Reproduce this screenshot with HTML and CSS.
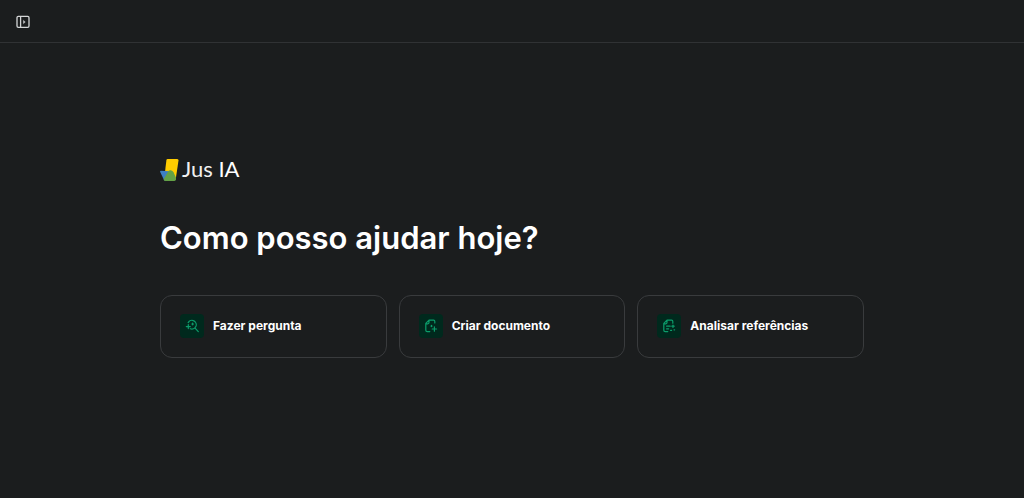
FILE: index.html
```html
<!DOCTYPE html>
<html lang="pt-BR">
<head>
<meta charset="utf-8">
<meta name="viewport" content="width=device-width, initial-scale=1">
<title>Jus IA</title>
<link rel="stylesheet" href="styles.css">
</head>
<body>
<header class="topbar">
  <button class="toggle" type="button" aria-label="Abrir menu">
    <svg viewBox="0 0 14 14" width="14" height="14" fill="none" stroke="currentColor" stroke-width="1.3" stroke-linejoin="round"><rect x="1" y="1.4" width="12" height="11" rx="1.3"/><path d="M4.6 1.4v11"/><path d="M7.4 5.2 9.3 7 7.4 8.8z" fill="currentColor" stroke-width=".3"/></svg>
  </button>
</header>
<main class="home">
  <div class="brand">
    <svg class="brand-mark" viewBox="0 0 19 24" width="19" height="24" aria-hidden="true">
      <path d="M7.6 1h9.600q1.500 0 1.300 1.500L15.600 22 5 14 6.400 2.100Q6.600 1 7.600 1z" fill="#fc0"/>
      <path d="M.8 12.800 10 13.200 5.200 23.200 3.900 21.800.2 14q-.4-1.200.6-1.200z" fill="#3d7fc4"/>
      <path d="M3.700 21 8.400 13.200Q9.200 12 10.800 12.200 12.700 12.500 13.500 14.200L15.900 19.600v2q0 1.400-1.500 1.400H5.300Q3.500 23 3.700 21z" fill="#64a146"/>
    </svg>
    <span class="brand-name">Jus <span class="brand-ia">IA</span></span>
  </div>
  <h1 class="title">Como posso ajudar hoje?</h1>
  <div class="actions">
    <button class="card" type="button">
      <span class="badge"><svg viewBox="0 0 14 14" width="14" height="14"><path d="M3.200 3.600A4.300 4.300 0 1 1 5.300 9.700M10.300 9.300 13.300 12.600"/><path d="M3.300 5.600v4M1.300 7.600h4M7.600 4.200v1.600M6.800 5h1.600"/></svg></span>
      Fazer pergunta
    </button>
    <button class="card" type="button">
      <span class="badge"><svg viewBox="0 0 14 14" width="14" height="14"><path d="M10.800 4V2.400Q10.800 1.200 9.600 1.200H5L1.800 4.400V11.200Q1.800 12.600 3.200 12.600H5.800M1.800 4.800H3.800Q5 4.800 5 3.600V1.200"/><path d="M10.400 7.800v4.400M8.200 10h4.400M7.500 6.400v1.200M6.900 7h1.200"/></svg></span>
      Criar documento
    </button>
    <button class="card" type="button">
      <span class="badge"><svg viewBox="0 0 14 14" width="14" height="14"><path d="M10.800 4.200V2.400Q10.800 1.200 9.600 1.200H5L1.800 4.400V11.200Q1.800 12.600 3.200 12.600H5.800M1.800 4.800H3.800Q5 4.800 5 3.600V1.200"/><path d="M4.600 7.200h3.600M4.600 9.800h2M11 6v2.400M9.800 7.200h2.400M8.600 11.400h1M12 10.800h.6"/></svg></span>
      Analisar referências
    </button>
  </div>
</main>
</body>
</html>
```
FILE: styles.css
```css
* {
  box-sizing: border-box;
}

body {
  display: flex;
  flex-direction: column;
  min-height: 100vh;
  margin: 0;
  background: #1b1d1e;
  color: #fff;
  font-family: Inter, "Liberation Sans", sans-serif;
}

.topbar {
  display: flex;
  align-items: center;
  padding: 15px 16px 13px;
  border-bottom: 1px solid #303234;
}

.toggle {
  display: flex;
  padding: 0;
  border: 0;
  background: none;
  color: #d4d6d7;
}

.home {
  display: flex;
  flex: 1;
  flex-direction: column;
  justify-content: center;
  width: 100%;
  max-width: 736px;
  margin: 0 auto;
  padding: 0 16px 25px;
}

.brand {
  display: flex;
  align-items: flex-start;
  gap: 3px;
}

.brand-name {
  color: #f0f0f0;
  font-family: Lato, "Open Sans", sans-serif;
  font-size: 22px;
  font-weight: 400;
  line-height: 22px;
}

.brand-ia {
  color: #fff;
}

.title {
  margin: 36px 0 37px;
  font-size: 31px;
  font-weight: 600;
  line-height: 40px;
}

.actions {
  display: grid;
  grid-template-columns: repeat(auto-fit, minmax(200px, 1fr));
  gap: 12px;
}

.card {
  display: flex;
  align-items: center;
  gap: 9px;
  padding: 18px 19px 19px;
  border: 1px solid #393b3d;
  border-radius: 12px;
  background: #1b1d1e;
  color: #fff;
  font-family: inherit;
  font-size: 12px;
  font-weight: 700;
  line-height: 24px;
  text-align: left;
}

.badge {
  display: flex;
  align-items: center;
  justify-content: center;
  width: 24px;
  height: 24px;
  border-radius: 4px;
  background: #00291d;
}

.badge svg {
  fill: none;
  stroke: #0b9d6b;
  stroke-width: 1.2;
  stroke-linecap: round;
  stroke-linejoin: round;
}
```
